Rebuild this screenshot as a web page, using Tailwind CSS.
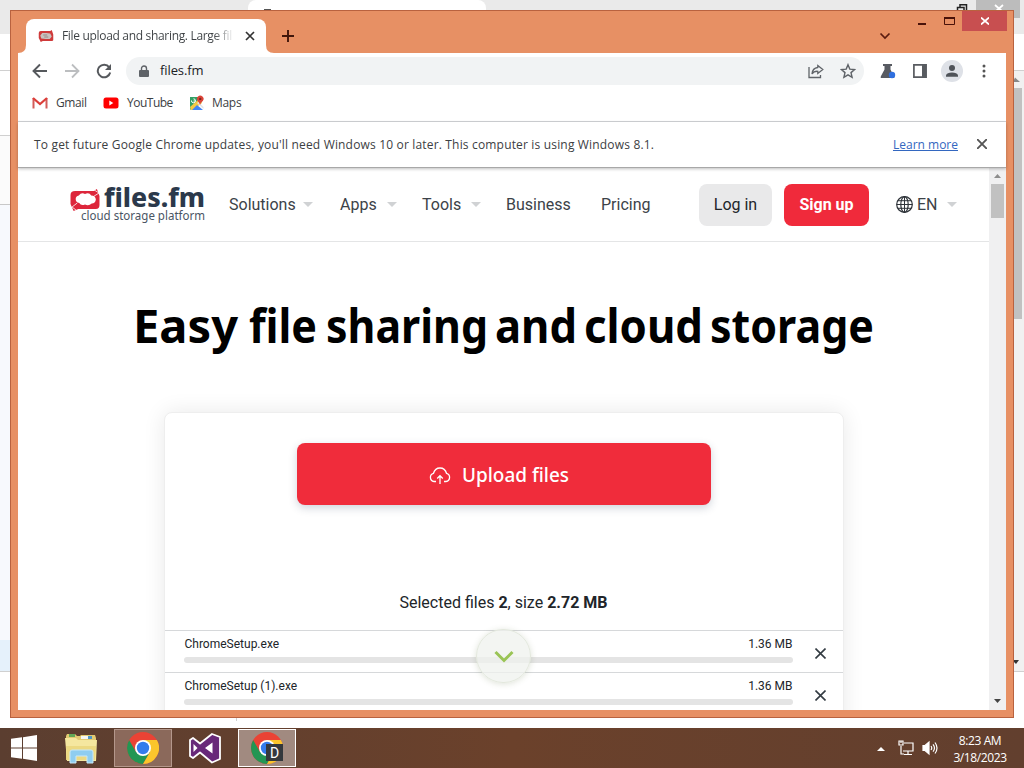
<!DOCTYPE html>
<html lang="en">
<head>
  <meta charset="UTF-8" />
  <title>Easy file sharing and cloud storage</title>
  <meta name="viewport" content="width=device-width, initial-scale=1.0" />
  <script src="https://cdn.jsdelivr.net/npm/@tailwindcss/browser@4"></script>
</head>
<body class="relative w-[1024px] h-[768px] overflow-hidden bg-white flex flex-col font-['Open_Sans',sans-serif] text-[12px] text-[#3c4043]">

  <!-- window behind -->
  <div class="h-[728px] flex flex-col">
    <div class="h-[34px] bg-[#eaeaea] flex justify-between pl-[248px] pr-[4px]">
      <div class="w-[238px] h-[34px] rounded-t-lg bg-white"><div class="ml-[16px] mt-[9px] w-[7px] h-[2px] bg-[#555]"></div></div>
      <div class="flex">
        <svg class="w-[24px] h-[18px]" viewBox="0 0 24 18" fill="none" stroke="#222" stroke-width="1.5"><path d="M5.5 14V7.500H12V14M8 7V4.800H14.500V12"/></svg>
        <svg class="w-[44px] h-[18px] bg-[#bcbcbc]" viewBox="0 0 44 18" fill="none" stroke="#fff" stroke-width="1.8"><path d="M19 5l8 7M27 5l-8 7"/></svg>
      </div>
    </div>
    <div class="h-[37px] border-b border-[#d0d0d0]"></div>
    <div class="h-[65px] border-b border-[#d0d0d0]"></div>
    <div class="h-[69px] bg-[#fbfbfb] border-b border-[#c8c8c8]"></div>
    <div class="h-[435px] bg-[#f7f9fd]"></div>
    <div class="h-[32px] flex border-b border-[#d0d0d0]"><div class="w-[500px] bg-[#e5f1fb]"></div><div class="grow bg-[#f1f1f1]"></div></div>
    <div class="h-[49px] ml-[236px] border-l border-[#d0d0d0]"></div>
  </div>
  <div class="absolute right-0 top-[71px] w-[11px] h-[600px] bg-[#f1f1f1]">
    <svg class="w-[11px] h-[17px]" viewBox="0 0 11 17"><path d="M2 6.500l5 4.500H0z" fill="#888"/></svg>
    <div class="w-[9px] h-[231px] bg-[#c1c1c1]"></div>
    <svg class="absolute bottom-[5px] left-0" width="11" height="8" viewBox="0 0 11 8"><path d="M0 2h6l-3 4L0 3z" fill="#333"/></svg>
  </div>

  <!-- browser window -->
  <div class="absolute left-[10px] top-[10px] w-[1004px] h-[708px] bg-[#e79064] border border-[#b9623f] px-[7px] pb-[7px] flex flex-col">

    <!-- title bar -->
    <div class="h-[42px] shrink-0 flex">
      <div class="relative ml-[8px] mt-[8px] w-[240px] h-[34px] bg-white rounded-t-lg flex items-center pl-[12px]">
        <svg class="w-[16px] h-[12px] shrink-0" viewBox="0 0 31 24"><path d="M5 2H24L27 0L30 9V20Q30 22 27 22H9L5 24L1 16V6Q1 2 5 2Z" fill="#cf3a3a"/><path d="M8 6h8l8 1 3 6-4 5h-8l-9-1-2-6z" fill="#c9c3bf"/><path d="M10 10h8M12 14h8" stroke="#988" stroke-width="2"/></svg>
        <div class="ml-[8px] w-[172px] overflow-hidden whitespace-nowrap tracking-[-0.32px] bg-gradient-to-r from-[#3c4043] from-88% to-transparent bg-clip-text text-transparent">File upload and sharing. Large fil</div>
        <svg class="ml-[11px] w-[10px] h-[10px] shrink-0" viewBox="0 0 10 10" stroke="#333" stroke-width="1.7"><path d="M1 1l8 8M9 1l-8 8"/></svg>
        <svg class="absolute -left-[8px] bottom-0 w-[8px] h-[8px]" viewBox="0 0 8 8" fill="#fff"><path d="M8 0V8H0Q8 8 8 0"/></svg>
        <svg class="absolute -right-[8px] bottom-0 w-[8px] h-[8px]" viewBox="0 0 8 8" fill="#fff"><path d="M0 0V8H8Q0 8 0 0"/></svg>
      </div>
      <svg class="ml-[16px] mt-[19px] w-[12px] h-[12px]" viewBox="0 0 12 12" stroke="#41160b" stroke-width="1.9"><path d="M6 0v12M0 6h12"/></svg>
      <svg class="ml-auto mt-[21px] w-[12px] h-[8px]" viewBox="0 0 12 8" fill="none" stroke="#5a1c10" stroke-width="1.7"><path d="M1.500 1.500L6 6l4.500-4.500"/></svg>
      <svg class="ml-[27px] w-[8px] h-[20px]" viewBox="0 0 8 20"><path d="M0 12h8v2H0z" fill="#4a1209"/></svg>
      <svg class="ml-[18px] w-[11px] h-[20px]" viewBox="0 0 11 20" fill="none" stroke="#4a1209"><path d="M.5 6.500h10v7H.5z"/><path d="M0 7h11" stroke-width="2"/></svg>
      <div class="-mr-[1px] ml-[7px] w-[45px] h-[20px] bg-[#c84f50] flex items-center justify-center">
        <svg class="w-[8px] h-[8px]" viewBox="0 0 8 8" stroke="#fff" stroke-width="1.7"><path d="M0 .5l8 7M8 .5l-8 7"/></svg>
      </div>
    </div>

    <!-- toolbar -->
    <div class="h-[37px] shrink-0 bg-white flex items-center pl-[14px] pr-[13px] pb-[1px]">
      <svg class="w-[16px] h-[16px]" viewBox="0 0 16 16" fill="none" stroke="#56595d" stroke-width="1.9"><path d="M15 8H2M8 1.500L1.500 8 8 14.500"/></svg>
      <svg class="ml-[16px] w-[16px] h-[16px]" viewBox="0 0 16 16" fill="none" stroke="#bcbec0" stroke-width="1.800"><path d="M1 8h13M8 1.500L14.500 8 8 14.500"/></svg>
      <svg class="ml-[16px] w-[16px] h-[16px]" viewBox="0 0 16 16" fill="none" stroke="#56595d" stroke-width="2"><path d="M13.200 4.300A6.300 6.300 0 1 0 14.200 9.500"/><path d="M15 1v6H9z" fill="#56595d" stroke="none"/></svg>
      <div class="ml-[14px] w-[738px] h-[28px] rounded-full bg-[#f1f3f4] flex items-center pl-[13px] pr-[8px]">
        <svg class="w-[10px] h-[13px]" viewBox="0 0 10 13"><path d="M1 5h8q1 0 1 1v5q0 1-1 1H1q-1 0-1-1V6q0-1 1-1" fill="#5f6368"/><path d="M2.500 5V3.500a2.500 2.500 0 0 1 5 0V5" fill="none" stroke="#5f6368" stroke-width="1.400"/></svg>
        <span class="ml-[11px] text-[13px] text-[#202124] tracking-[-0.1px]">files.fm</span>
        <svg class="ml-auto w-[16px] h-[16px]" viewBox="0 0 16 16" fill="none" stroke="#5f6368" stroke-width="1.300"><path d="M1 4v10.500h11.500V12M9.800 2.500L14.800 6.500l-5 4V8.300Q6 8 4 11q.5-6 5.800-6.500z"/></svg>
        <svg class="ml-[16px] w-[16px] h-[16px]" viewBox="0 0 16 16" fill="none" stroke="#5f6368" stroke-width="1.400"><path d="M8 1.700l1.800 4.400 4.800.4-3.600 3.100 1.100 4.700L8 11.800l-4.100 2.500L5 9.600 1.400 6.500l4.800-.4z"/></svg>
      </div>
      <svg class="ml-[16px] w-[16px] h-[16px]" viewBox="0 0 16 16"><path d="M3 1h9v2h-1.500v3.500L14.500 15H.8Q.5 14 1 13L4.500 6.500V3H3z" fill="#585b62"/><circle cx="12" cy="12" r="3.200" fill="#2f6fdf"/></svg>
      <svg class="ml-[17px] w-[14px] h-[14px]" viewBox="0 0 14 14" fill="none" stroke="#585b60" stroke-width="1.700"><path d="M.9.900h12.200v12.200H.9z"/><path d="M11 1v12" stroke-width="4"/></svg>
      <svg class="ml-[14px] w-[22px] h-[22px]" viewBox="0 0 22 22"><circle cx="11" cy="11" r="11" fill="#dee1e7"/><circle cx="11" cy="8" r="3" fill="#4f5359"/><path d="M5 16.800v-1.500Q6 12.500 11 12.500T17 15.300v1.500z" fill="#4f5359"/></svg>
      <svg class="ml-[19px] w-[4px] h-[14px]" viewBox="0 0 4 14" fill="#555"><circle cx="2" cy="2" r="1.500"/><circle cx="2" cy="7" r="1.500"/><circle cx="2" cy="12" r="1.500"/></svg>
    </div>

    <!-- bookmarks -->
    <div class="h-[32px] shrink-0 bg-white border-b border-[#d3d5d8] flex items-center pl-[14px] pb-[6px]">
      <svg class="w-[16px] h-[12px]" viewBox="0 0 16 12"><path d="M1.500 1v10.500M14.500 1v10.500" stroke="#d35d5a" stroke-width="2"/><path d="M1 1l7 6 7-6" fill="none" stroke="#dc3f3a" stroke-width="2.200"/></svg>
      <span class="ml-[8px] w-[47px] tracking-[-0.4px]">Gmail</span>
      <svg class="w-[16px] h-[12px]" viewBox="0 0 16 12"><rect x=".5" y=".5" width="15" height="11" rx="2.500" fill="#f00"/><path d="M6.300 3.500v5l4-2.500z" fill="#fff"/></svg>
      <span class="ml-[8px] w-[62px] tracking-[-0.5px]">YouTube</span>
      <svg class="w-[16px] h-[16px]" viewBox="0 0 16 16"><path d="M1 2h9l3 5-11 8Q1 15 1 13z" fill="#34a065"/><path d="M1 12L10 4l3 4-9 7H2z" fill="#f6c944"/><path d="M3 15l5-5 6 5z" fill="#4285f4"/><path d="M9.500 7l5 5v2L8 8z" fill="#e1e4e7"/><path d="M2.500 5.500a2 2 0 1 0 2-1.700M4.500 6H6.500" stroke="#fff" fill="none"/><path d="M11 10Q10.500 7.500 8.700 6A3.300 3.300 0 1 1 13.800 6Q11.500 7.500 11 10" fill="#dc4437"/><circle cx="11.200" cy="3.900" r="1.200" fill="#7b2620"/></svg>
      <span class="ml-[7px] tracking-[-0.3px]">Maps</span>
    </div>

    <!-- infobar -->
    <div class="relative z-10 h-[46px] shrink-0 bg-white border-b border-[#a8a8a8] shadow-[0_1px_3px_rgba(0,0,0,0.25)] flex items-center pl-[16px] pr-[19px]">
      <span class="whitespace-nowrap tracking-[0.17px]">To get future Google Chrome updates, you'll need Windows 10 or later. This computer is using Windows 8.1.</span>
      <a class="ml-auto underline text-[#3367c0] whitespace-nowrap">Learn more</a>
      <svg class="ml-[19px] mb-[2px] w-[10px] h-[10px]" viewBox="0 0 10 10" stroke="#555" stroke-width="1.900"><path d="M0 0l10 10M10 0L0 10"/></svg>
    </div>

    <!-- page -->
    <div class="grow min-h-0 flex bg-white font-[Roboto,sans-serif]">
      <div class="w-[971px] overflow-hidden flex flex-col">
        <nav class="h-[74px] shrink-0 border-b border-[#e4e5e6] flex items-center pl-[52px] text-[16px] text-[#3c4248]">
          <div class="w-[135px] h-[42px] flex flex-col">
            <div class="h-[27px] flex items-center">
              <svg class="mt-[5px] w-[30px] h-[22px] shrink-0" viewBox="0 0 29 22" preserveAspectRatio="none"><path d="M5 2H23L26 0L28.500 7V16Q28.500 20 25 20H8L3.500 22L.5 15V6Q.5 2 5 2Z" fill="#dd263b"/><path d="M5.500 10q0-3 3-3.500Q11 3 14.500 5q4-2 6 1.500 4 0 4.500 4-.5 4-4 4-3 3-6.500 1-4 1.500-5.500-1.500-3.500-.5-3.500-4" fill="#fff"/><path d="M22 0l6 4-6 4M7 22l-5-4 5-4" fill="none" stroke="#fff" stroke-width=".8"/></svg>
              <svg class="ml-[4px] w-[101px] h-[30px] shrink-0 overflow-visible" viewBox="0 0 101 30"><text x="0" y="25" textLength="101" lengthAdjust="spacingAndGlyphs" class="font-['Noto_Sans',sans-serif] font-extrabold text-[27px]" fill="#2b394b">files.fm</text></svg>
            </div>
            <svg class="ml-[10px] w-[125px] h-[15px] shrink-0 overflow-visible" viewBox="0 0 125 15"><text x="1" y="9" textLength="124" lengthAdjust="spacingAndGlyphs" class="font-['Noto_Sans',sans-serif] text-[12.5px]" fill="#4a5564">cloud storage platform</text></svg>
          </div>
          <span class="ml-[24px] w-[74px]">Solutions</span>
          <svg class="w-[10px] h-[5px]" viewBox="0 0 10 5" fill="#d0d2d4"><path d="M0 0h10L5 5z"/></svg>
          <span class="ml-[27px] w-[47px]">Apps</span>
          <svg class="w-[10px] h-[5px]" viewBox="0 0 10 5" fill="#d0d2d4"><path d="M0 0h10L5 5z"/></svg>
          <span class="ml-[25px] w-[49px]">Tools</span>
          <svg class="w-[10px] h-[5px]" viewBox="0 0 10 5" fill="#d0d2d4"><path d="M0 0h10L5 5z"/></svg>
          <span class="ml-[25px] w-[95px]">Business</span>
          <span class="w-[98px]">Pricing</span>
          <div class="w-[73px] h-[42px] rounded-lg bg-[#e9e9ea] flex items-center justify-center text-[#212529]">Log in</div>
          <div class="ml-[12px] w-[85px] h-[42px] rounded-lg bg-[#f02a3b] flex items-center justify-center text-white font-bold">Sign up</div>
          <svg class="ml-[27px] w-[17px] h-[17px]" viewBox="0 0 17 17" fill="none" stroke="#2f343a" stroke-width="1.200"><circle cx="8.500" cy="8.500" r="7.800"/><ellipse cx="8.500" cy="8.500" rx="3.700" ry="7.800"/><path d="M.7 8.500h15.600M1.900 4.700h13.200M1.900 12.300h13.200M8.500 1v15" stroke-width="1"/></svg>
          <span class="ml-[4px] w-[30px]">EN</span>
          <svg class="w-[10px] h-[5px]" viewBox="0 0 10 5" fill="#d0d2d4"><path d="M0 0h10L5 5z"/></svg>
        </nav>

        <h1 class="h-[170px] shrink-0 pl-[116px] pt-[52px]">
          <svg class="w-[742px] h-[64px] overflow-visible" viewBox="0 0 742 64">
            <text y="49" class="font-['Noto_Sans',sans-serif] font-bold text-[47px]" fill="#000">
              <tspan x="-1" textLength="105" lengthAdjust="spacingAndGlyphs">Easy</tspan>
              <tspan x="115" textLength="68" lengthAdjust="spacingAndGlyphs">file</tspan>
              <tspan x="192" textLength="162" lengthAdjust="spacingAndGlyphs">sharing</tspan>
              <tspan x="361" textLength="82" lengthAdjust="spacingAndGlyphs">and</tspan>
              <tspan x="450" textLength="119" lengthAdjust="spacingAndGlyphs">cloud</tspan>
              <tspan x="576" textLength="164" lengthAdjust="spacingAndGlyphs">storage</tspan>
            </text>
          </svg>
        </h1>

        <div class="relative ml-[146px] w-[680px] h-[330px] shrink-0 bg-white rounded-t-lg border border-[#eeeeee] shadow-[0_0_22px_rgba(0,0,0,0.09)] flex flex-col">
          <div class="ml-[132px] mt-[30px] w-[414px] h-[62px] shrink-0 rounded-lg bg-[#f02c3b] shadow-[0_3px_8px_rgba(40,60,90,0.22)] flex items-center pl-[132px] text-white">
            <svg class="w-[22px] h-[18px] mt-[3px]" viewBox="0 0 22 18" fill="none" stroke="#fff" stroke-width="1.300"><path d="M7 14.500H5A4.200 4.200 0 0 1 4.500 6.300Q6 1 11 1t6.500 5.300A4.200 4.200 0 0 1 17 14.500H15M11 17V9M8.200 11.500L11 8.700l2.800 2.800"/></svg>
            <svg class="ml-[11px] mt-[2px] w-[108px] h-[28px] overflow-visible" viewBox="0 0 108 28"><text x="0" y="21" textLength="107" lengthAdjust="spacingAndGlyphs" class="font-['Noto_Sans',sans-serif] font-medium text-[20px]" fill="#fff">Upload files</text></svg>
          </div>
          <div class="h-[125px] shrink-0 pt-[86px] pr-[1px] text-center text-[16px] leading-[24px] text-[#212529]">Selected files <b>2</b>, size <b>2.72 MB</b></div>
          <div class="h-[42px] shrink-0 border-t border-[#d6d8da] flex items-center pl-[19px] text-[#212529]">
            <div class="w-[609px] h-[36px] flex flex-col">
              <div class="h-[23px] flex justify-between leading-[20px] pl-[.5px] pr-[.5px]"><span>ChromeSetup.exe</span><span>1.36 MB</span></div>
              <div class="h-[6px] rounded-full bg-[#e4e4e4]"></div>
            </div>
            <svg class="ml-[22px] mt-[3px] w-[11px] h-[11px]" viewBox="0 0 11 11" stroke="#333b42" stroke-width="1.600"><path d="M.5.500l10 10M10.500.500l-10 10"/></svg>
          </div>
          <div class="h-[42px] shrink-0 border-t border-[#d6d8da] flex items-center pl-[19px] text-[#212529]">
            <div class="w-[609px] h-[36px] flex flex-col">
              <div class="h-[23px] flex justify-between leading-[20px] pl-[.5px] pr-[.5px]"><span>ChromeSetup (1).exe</span><span>1.36 MB</span></div>
              <div class="h-[6px] rounded-full bg-[#e4e4e4]"></div>
            </div>
            <svg class="ml-[22px] mt-[3px] w-[11px] h-[11px]" viewBox="0 0 11 11" stroke="#333b42" stroke-width="1.600"><path d="M.5.500l10 10M10.500.500l-10 10"/></svg>
          </div>
          <!-- scroll hint -->
          <div class="absolute left-[311px] top-[216px] w-[55px] h-[54px] rounded-full bg-[#eff1ee]/75 border border-[#e3e8dd] shadow-[0_1px_6px_rgba(90,110,60,0.2)] flex items-center justify-center">
            <svg class="mt-[1px] w-[20px] h-[13px]" viewBox="0 0 20 13" fill="none" stroke="#9ac456" stroke-width="3"><path d="M1.500 2L10 10.500 18.500 2"/></svg>
          </div>
        </div>
      </div>

      <!-- scrollbar -->
      <div class="w-[17px] bg-[#f0f0f1] flex flex-col items-center">
        <svg class="w-[17px] h-[16px] shrink-0" viewBox="0 0 17 16"><path d="M5 10l3.500-4L12 10z" fill="#8d8d8d"/></svg>
        <div class="w-[13px] h-[34px] bg-[#c1c1c1]"></div>
        <svg class="mt-auto w-[17px] h-[17px]" viewBox="0 0 17 17"><path d="M5 6h7l-3.500 4z" fill="#444"/></svg>
      </div>
    </div>
  </div>

  <!-- taskbar -->
  <div class="h-[40px] shrink-0 bg-gradient-to-r from-[#5b3e30] via-[#6b412b] to-[#623f2e] flex items-center text-white">
    <svg class="ml-[11px] w-[26px] h-[26px]" viewBox="0 0 26 26" fill="#fff"><path d="M0 3.800l11-1.500v10.200H0zM12 2.200L26 0v12.500H12zM0 13.500h11v10.200L0 22.200zM12 13.500h14V26l-14-2.200z"/></svg>
    <svg class="ml-[27px] w-[34px] h-[32px]" viewBox="0 0 34 32"><path d="M2 4l1-2h8l2 2h3l1-1h14l1 3v22H2z" fill="#e2ca72"/><path d="M5 2h6v3H5z" fill="#62a857"/><path d="M17 4h8v3h-8z" fill="#f4f6f4"/><path d="M24 4h4v3h-4z" fill="#4d96c4"/><path d="M1 6h11l2 2h19l-1 21H3z" fill="#f5e79f"/><path d="M2 14h30l-1 14H3z" fill="#ecd982"/><path d="M6 31V20q0-2 2-2h19q2 0 2 2v11h-6v-7H12v7z" fill="#8fcdf0" stroke="#c8e8f8"/></svg>
    <div class="ml-[16px] w-[58px] h-[38px] bg-[#8b695b] border border-[#b4978b] flex items-center justify-center">
      <svg class="w-[32px] h-[32px]" viewBox="0 0 32 32"><circle cx="16" cy="16" r="16" fill="#ea4335"/><path d="M2.150 8A16 16 0 0 0 16 32L23 20 16 16 9 20z" fill="#229653"/><path d="M16 32A16 16 0 0 0 29.860 8H16L23 20z" fill="#fbc62c"/><circle cx="16" cy="16" r="8" fill="#fff"/><circle cx="16" cy="16" r="6.200" fill="#347cec"/></svg>
    </div>
    <svg class="ml-[16px] w-[34px] h-[32px]" viewBox="0 0 34 32"><path d="M24 2l8 3v22l-8 3.500L12 20.500 5 26l-3-2V8l3-2 7 5.500z" fill="#682979" stroke="#fff" stroke-width="1.800" stroke-linejoin="round"/><path d="M24.500 10.500v11L17 16zM5.500 12l4 4-4 4z" fill="#fff"/></svg>
    <div class="relative ml-[16px] w-[58px] h-[38px] bg-[#a18a80] border border-white flex items-center justify-center">
      <svg class="w-[32px] h-[32px]" viewBox="0 0 32 32"><circle cx="16" cy="16" r="16" fill="#ea4335"/><path d="M2.150 8A16 16 0 0 0 16 32L23 20 16 16 9 20z" fill="#229653"/><path d="M16 32A16 16 0 0 0 29.860 8H16L23 20z" fill="#fbc62c"/><circle cx="16" cy="16" r="8" fill="#fff"/><circle cx="16" cy="16" r="6.200" fill="#347cec"/></svg>
      <div class="absolute left-[27px] top-[14px] w-[17px] h-[17px] bg-[#35393d] flex items-center justify-center font-[Roboto,sans-serif] text-[14px] leading-none">D</div>
    </div>
    <svg class="ml-auto w-[8px] h-[5px]" viewBox="0 0 8 5" fill="#fff"><path d="M0 5l4-4 4 4z"/></svg>
    <svg class="ml-[13px] w-[16px] h-[16px]" viewBox="0 0 16 16" fill="none" stroke="#fff" stroke-width="1.200"><path d="M6 3h9v8H5M10 11v3M6 14.500h8M3 6v8h3"/><path d="M1 1h4v4H1zM3 1v2" /></svg>
    <svg class="ml-[8px] w-[16px] h-[16px]" viewBox="0 0 16 16" fill="none" stroke="#fff" stroke-width="1.200"><path d="M1 5.500h2L7 2v12L3 10.500H1z" fill="#fff"/><path d="M9 6q1.500 2 0 4M11 4.300q3 3.700 0 7.400M13 2.500q4 5.500 0 11"/></svg>
    <div class="ml-[12px] w-[60px] mr-[14px] pt-[2px] text-center leading-[17px] tracking-[-0.4px]">8:23 AM<br>3/18/2023</div>
  </div>

</body>
</html>
